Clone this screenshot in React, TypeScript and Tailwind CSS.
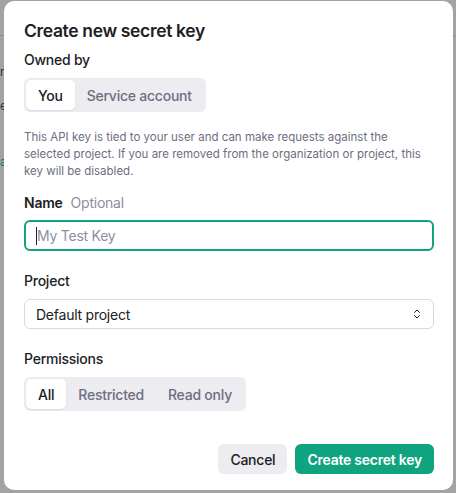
import { ChevronsUpDown } from 'lucide-react';

export default function App() {
  return (
    <div
      className="relative h-[493px] w-[456px] overflow-hidden bg-[#a3a3a3]"
      style={{ fontFamily: 'Inter, "Noto Sans", sans-serif' }}
    >
      {/* page behind the overlay */}
      <div className="absolute left-0 top-[35px] h-px w-[4px] bg-[#8f8f8f]" />
      <div className="absolute right-0 top-[35px] h-px w-[4px] bg-[#8f8f8f]" />
      <div className="absolute left-0 top-[66px] text-[12px] leading-none text-[#333]">r</div>
      <div className="absolute left-0 top-[100px] text-[12px] leading-none text-[#333]">e</div>
      <div className="absolute left-0 top-[156px] text-[12px] leading-none text-[#0b7a5e]">a</div>

      <div className="absolute left-[4px] top-px flex h-[489px] w-[449px] flex-col rounded-[10px] bg-white pl-5 pr-[19px] pt-[17px] tracking-[-0.015em] text-[#202123]">
        <h2 className="text-[17.5px] font-semibold leading-[26px] tracking-[-0.02em]">Create new secret key</h2>

        <div className="mt-[6px] text-[14px] font-medium leading-[20px]">Owned by</div>
        <div className="mt-[8px] flex w-fit rounded-[6px] bg-[#ececf1] p-[2px] text-[14px] font-medium">
          <div className="flex h-[30px] items-center rounded-[5px] bg-white px-3 shadow-[0_1px_2px_rgba(0,0,0,0.08)]">You</div>
          <div className="flex h-[30px] items-center px-3 text-[#6e6e80]">Service account</div>
        </div>

        <p className="mt-[17px] text-[11.5px] leading-[17px] tracking-normal text-[#6e6e80]">
          This API key is tied to your user and can make requests against the selected project. If you are removed from the organization or project, this key will be disabled.
        </p>

        <div className="mt-[13px] flex gap-2 text-[14px] leading-[20px]">
          <span className="font-semibold">Name</span>
          <span className="text-[#8e8ea0]">Optional</span>
        </div>
        <div className="mt-[7px] flex h-[31px] items-center rounded-[6px] border-2 border-[#10a37f] px-[10px] text-[14px]">
          <span className="h-[18px] w-px bg-[#202123]" />
          <span className="text-[#8e8ea0]">My Test Key</span>
        </div>

        <div className="mt-[20px] text-[14px] font-medium leading-[20px]">Project</div>
        <div className="mt-[8px] flex h-[30px] items-center justify-between rounded-[6px] border border-[#d9d9e3] pl-[11px] pr-[10px] text-[14px]">
          <span>Default project</span>
          <ChevronsUpDown size={12} strokeWidth={2} className="text-[#202123]" />
        </div>

        <div className="mt-[20px] text-[14px] font-medium leading-[20px]">Permissions</div>
        <div className="mt-[8px] flex w-fit rounded-[6px] bg-[#ececf1] p-[2px] text-[14px] font-medium">
          <div className="flex h-[30px] items-center rounded-[5px] bg-white px-3 shadow-[0_1px_2px_rgba(0,0,0,0.08)]">All</div>
          <div className="flex h-[30px] items-center px-3 text-[#6e6e80]">Restricted</div>
          <div className="flex h-[30px] items-center px-3 text-[#6e6e80]">Read only</div>
        </div>

        <div className="mt-[33px] flex justify-end gap-2 text-[14px] font-medium">
          <button className="h-[30px] rounded-[6px] bg-[#ececf1] px-3 text-[#202123]">Cancel</button>
          <button className="h-[30px] rounded-[6px] bg-[#10a37f] px-3 font-semibold text-white">Create secret key</button>
        </div>
      </div>
    </div>
  );
}
